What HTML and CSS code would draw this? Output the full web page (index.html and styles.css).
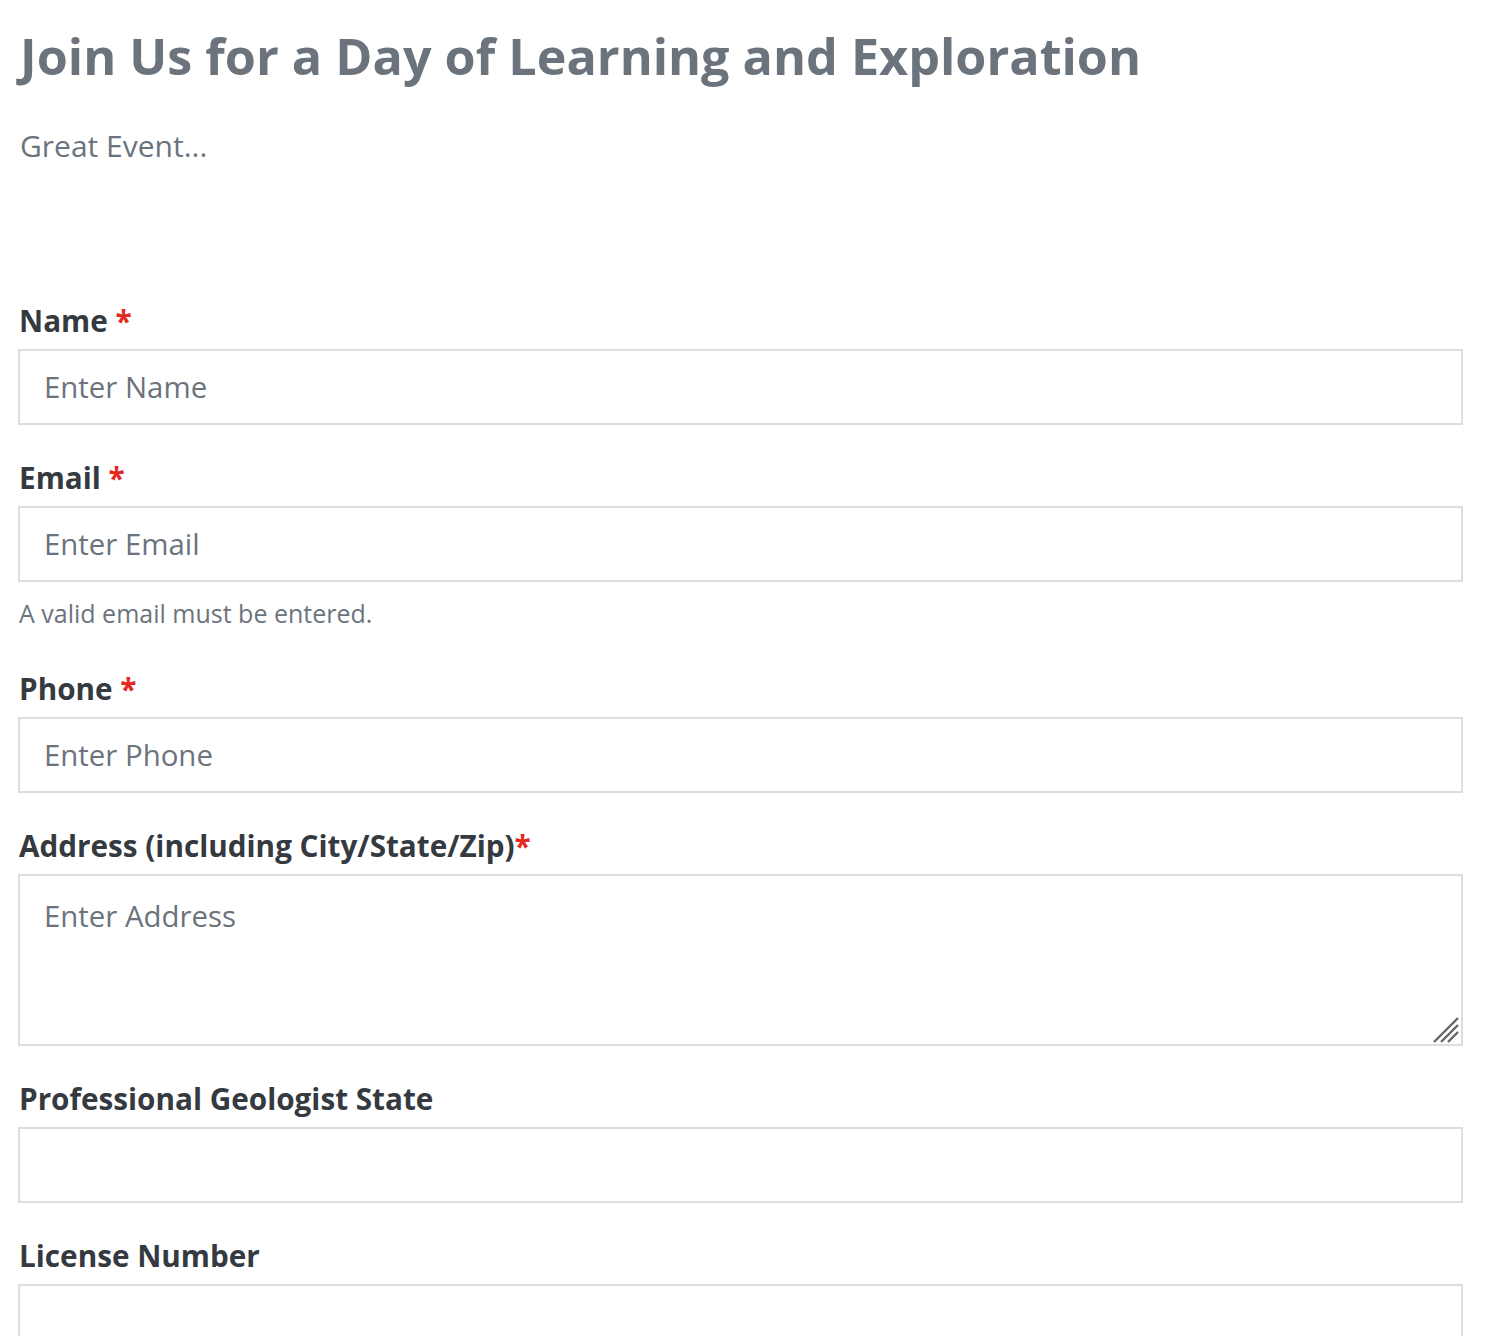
FILE: index.html
```html
<!DOCTYPE html>
<html>
<head>
  <meta charset="utf-8">
  <link rel="stylesheet" href="styles.css">
</head>
<body>
  <div class="content">
    <h1 class="title">Join Us for a Day of Learning and Exploration</h1>
    <p class="intro">Great Event...</p>

    <form class="form">
      <div class="field">
        <label class="label" for="name">Name <span class="req">*</span></label>
        <input class="input" id="name" type="text" placeholder="Enter Name">
      </div>

      <div class="field">
        <label class="label" for="email">Email <span class="req">*</span></label>
        <input class="input" id="email" type="email" placeholder="Enter Email">
        <div class="help">A valid email must be entered.</div>
      </div>

      <div class="field">
        <label class="label" for="phone">Phone <span class="req">*</span></label>
        <input class="input" id="phone" type="text" placeholder="Enter Phone">
      </div>

      <div class="field">
        <label class="label" for="address">Address (including City/State/Zip)<span class="req">*</span></label>
        <div class="area-wrap">
          <textarea class="input area" id="address" placeholder="Enter Address"></textarea>
          <svg class="grip" width="26" height="26" viewBox="0 0 26 26">
            <path d="M1 25 L25 1 M8 25 L25 8 M15 25 L25 15" stroke="#666" stroke-width="2.4" fill="none"/>
          </svg>
        </div>
      </div>

      <div class="field">
        <label class="label" for="pgstate">Professional Geologist State</label>
        <input class="input" id="pgstate" type="text">
      </div>

      <div class="field">
        <label class="label" for="license">License Number</label>
        <input class="input" id="license" type="text">
      </div>
    </form>
  </div>
</body>
</html>
```

FILE: styles.css
```css
body {
  margin: 0;
  background: #fff;
  font-family: "Open Sans", Lato, sans-serif;
  font-variant-ligatures: none;
}
.content {
  padding: 0 23px 0 18px;
}
.title {
  margin: 0 0 0 2px;
  padding-top: 22px;
  color: #6b737c;
  font-size: 50.3px;
  font-weight: 700;
  line-height: 68px;
}
.intro {
  margin: 36px 0 0 2px;
  color: #6b737c;
  font-size: 30px;
  line-height: 40px;
}
.form {
  margin-top: 135px;
}
.field {
  margin-bottom: 33px;
}
.label {
  display: block;
  margin: 0 0 8px 1px;
  color: #343a40;
  font-size: 29.7px;
  font-weight: 700;
  line-height: 40px;
}
.req {
  color: #e5281e;
}
.input {
  display: block;
  box-sizing: border-box;
  width: 100%;
  height: 76px;
  margin: 0;
  padding: 0 24px;
  border: 2px solid #dedede;
  border-radius: 0;
  background: #fff;
  color: #343a40;
  font-family: "Open Sans", Lato, sans-serif;
  font-size: 29.4px;
  outline: none;
}
.input::placeholder {
  color: #6b737c;
}
.area-wrap {
  position: relative;
}
.area {
  height: 172px;
  padding-top: 20px;
  resize: none;
}
.grip {
  position: absolute;
  right: 4px;
  bottom: 3px;
}
.help {
  margin: 15px 0 0 1px;
  padding-bottom: 7px;
  color: #6b737c;
  font-size: 25px;
  line-height: 32px;
}
```
